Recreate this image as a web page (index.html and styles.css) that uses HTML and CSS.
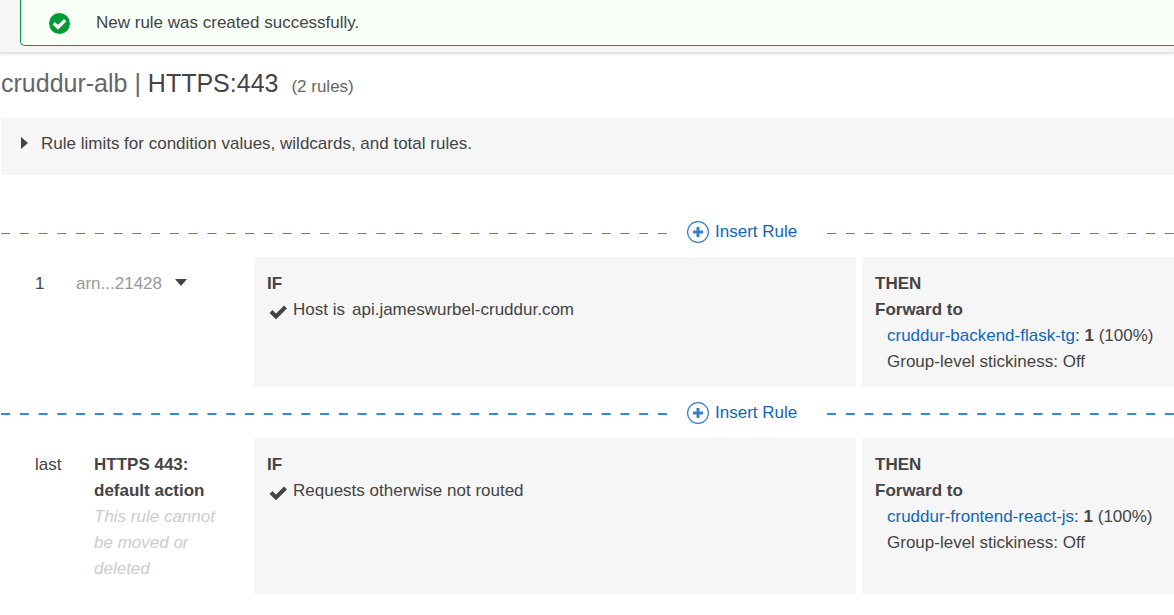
FILE: index.html
```html
<!DOCTYPE html>
<html lang="en">
<head>
<meta charset="utf-8">
<title>cruddur-alb | HTTPS:443</title>
<link rel="stylesheet" href="styles.css">
</head>
<body>
<div class="notices">
  <div class="notice" role="status">
    <svg class="notice-icon" viewBox="0 0 21 21" aria-hidden="true"><circle cx="10.5" cy="10.5" r="10.5" fill="#093"/><path d="M4.7 10.2l4.3 4.1 7.2-7.2" fill="none" stroke="#fff" stroke-width="3.4"/></svg>
    <span>New rule was created successfully.</span>
  </div>
</div>
<main class="page">
  <h1 class="title"><span class="balancer">cruddur-alb | </span>HTTPS:443 <small class="count">(2 rules)</small></h1>
  <details class="limits">
    <summary class="limits-head">
      <svg class="limits-arrow" viewBox="0 0 7 12" aria-hidden="true"><path d="M0 0l7 6-7 6z" fill="#444"/></svg>
      <span>Rule limits for condition values, wildcards, and total rules.</span>
    </summary>
  </details>
  <div class="rules">
    <div class="insert">
      <svg class="dashes dashes-left" aria-hidden="true"><line class="dash" x1="0" y1="2.5" x2="100%" y2="2.5"/></svg>
      <button class="insert-button" type="button">
        <svg class="plus" viewBox="0 0 22 22" aria-hidden="true"><circle cx="11" cy="11" r="10.4" fill="none" stroke="#3a7fc6" stroke-width="1.2"/><path d="M11 6v10M6 11h10" stroke="#3a7fc6" stroke-width="3"/></svg>
        <span>Insert Rule</span>
      </button>
      <svg class="dashes dashes-right" aria-hidden="true"><line class="dash" x1="0" y1="2.5" x2="100%" y2="2.5"/></svg>
    </div>
    <section class="rule">
      <div class="ident">
        <span class="order">1</span>
        <button class="arn" type="button">arn...21428 <svg class="caret" viewBox="0 0 12 7" aria-hidden="true"><path d="M0 0h12L6 7z" fill="#444"/></svg></button>
      </div>
      <div class="panel">
        <h2 class="label">IF</h2>
        <p class="condition"><svg class="check" viewBox="0 0 18 14" aria-hidden="true"><path d="M2 6.5l5 5 9.5-9.5" fill="none" stroke="#444" stroke-width="4"/></svg><span>Host is</span> <span class="host">api.jameswurbel-cruddur.com</span></p>
      </div>
      <div class="panel">
        <h2 class="label">THEN</h2>
        <h3 class="label">Forward to</h3>
        <p class="target"><a class="link" href="#backend">cruddur-backend-flask-tg</a>: <b>1</b> (100%)</p>
        <p class="target">Group-level stickiness: Off</p>
      </div>
    </section>
    <div class="insert">
      <svg class="dashes dashes-left" aria-hidden="true"><line class="dash dash-strong" x1="0" y1="2" x2="100%" y2="2"/></svg>
      <button class="insert-button" type="button">
        <svg class="plus" viewBox="0 0 22 22" aria-hidden="true"><circle cx="11" cy="11" r="10.4" fill="none" stroke="#3a7fc6" stroke-width="1.2"/><path d="M11 6v10M6 11h10" stroke="#3a7fc6" stroke-width="3"/></svg>
        <span>Insert Rule</span>
      </button>
      <svg class="dashes dashes-right" aria-hidden="true"><line class="dash dash-strong" x1="0" y1="2" x2="100%" y2="2"/></svg>
    </div>
    <section class="rule">
      <div class="ident">
        <span class="order">last</span>
        <div class="default-rule">
          <b>HTTPS 443: default action</b>
          <p class="fixed-note">This rule cannot be moved or deleted</p>
        </div>
      </div>
      <div class="panel">
        <h2 class="label">IF</h2>
        <p class="condition"><svg class="check" viewBox="0 0 18 14" aria-hidden="true"><path d="M2 6.5l5 5 9.5-9.5" fill="none" stroke="#444" stroke-width="4"/></svg><span>Requests otherwise not routed</span></p>
      </div>
      <div class="panel">
        <h2 class="label">THEN</h2>
        <h3 class="label">Forward to</h3>
        <p class="target"><a class="link" href="#frontend">cruddur-frontend-react-js</a>: <b>1</b> (100%)</p>
        <p class="target">Group-level stickiness: Off</p>
      </div>
    </section>
  </div>
</main>
</body>
</html>
```
FILE: styles.css
```css
* { box-sizing: border-box; }
body {
  margin: 0;
  background: #fff;
  color: #444;
  font: 17px/26px "Liberation Sans", Arial, sans-serif;
  overflow-x: hidden;
}
h1, h2, h3, p { margin: 0; font: inherit; }
button {
  padding: 0;
  border: 0;
  background: none;
  font: inherit;
  cursor: pointer;
}
svg { flex: none; display: block; }

.notices {
  padding: 0 0 6px 20px;
  background: #f6f6f6;
  border-bottom: 1px solid #e4e4e4;
  box-shadow: 0 1px 2px #ddd;
}
.notice {
  display: flex;
  align-items: center;
  gap: 26px;
  padding: 10px 28px 9px;
  border: 1px solid #093;
  border-width: 0 0 1px 1px;
  border-radius: 0 0 0 5px;
  background: #f7fff7;
}
.notice-icon { width: 21px; height: 21px; }

.page { padding-left: 1px; }
.title {
  padding: 14px 0 15px;
  font-size: 25px;
  line-height: 32px;
}
.balancer { color: #666; }
.count {
  margin-left: 6px;
  color: #666;
  font-size: 17px;
}
.limits { background: #f6f6f6; }
.limits-head {
  display: flex;
  align-items: center;
  gap: 13px;
  padding: 13px 20px 18px;
  list-style: none;
  cursor: pointer;
}
.limits-arrow {
  width: 7px;
  height: 12px;
  margin-bottom: 2px;
}

.rules { padding-top: 31px; }
.insert {
  display: flex;
  align-items: center;
  height: 51px;
}
.dashes {
  width: 0;
  height: 4px;
  margin-top: 3px;
}
.dashes-left { flex: 666 1 0; }
.dashes-right { flex: 347 1 0; }
.dash {
  stroke: #3388dd;
  stroke-width: 1px;
  stroke-dasharray: 9 9.77;
}
.dash-strong { stroke-width: 2px; }
.insert-button {
  display: flex;
  align-items: center;
  gap: 6px;
  width: 140px;
  margin-left: 20px;
  color: #1166bb;
}
.plus { width: 22px; height: 22px; }

.rule {
  display: grid;
  grid-template-columns: 247px minmax(0, 602fr) minmax(0, 312fr);
  column-gap: 6px;
}
.ident {
  display: grid;
  grid-template-columns: 41px 1fr;
  align-items: start;
  padding: 14px 13px 12px 34px;
}
.arn {
  display: flex;
  align-items: center;
  gap: 13px;
  color: #999;
}
.caret {
  width: 12px;
  height: 7px;
  margin-bottom: 3px;
}
.default-rule { padding-left: 18px; }
.fixed-note {
  color: #ccc;
  font-style: italic;
}
.panel {
  padding: 14px 0 12px 13px;
  background: #f6f6f6;
  white-space: nowrap;
}
.label { font-weight: bold; }
.condition {
  display: flex;
  align-items: center;
}
.check {
  width: 18px;
  height: 14px;
  margin: 3px 6px 0 2px;
}
.host { margin-left: 7px; }
.target { padding-left: 12px; }
.link {
  color: #1166bb;
  text-decoration: none;
}
```
